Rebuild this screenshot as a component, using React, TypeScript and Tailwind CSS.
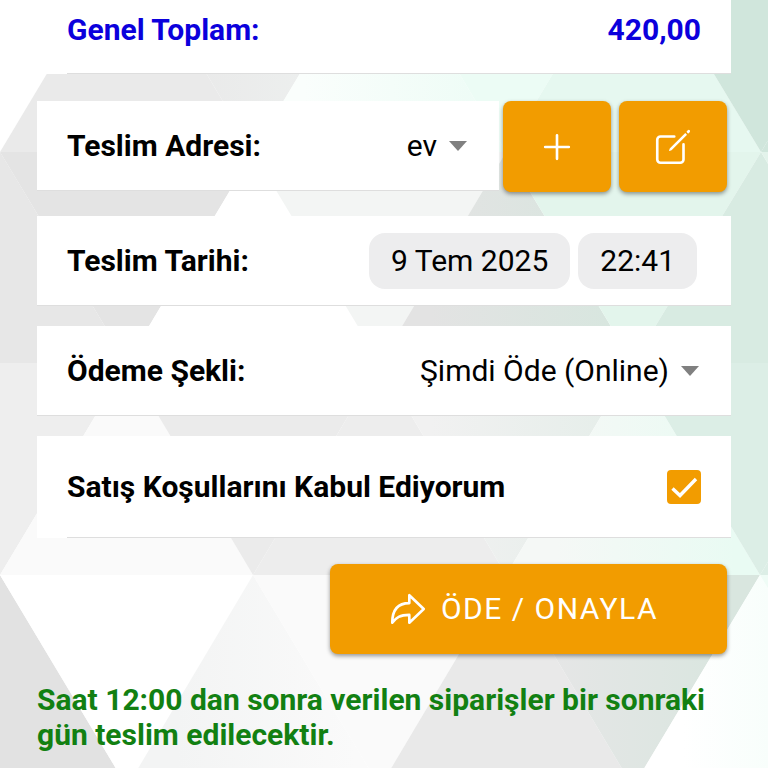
import { useState, type ReactNode } from "react";

type Facet = { points: string; fill: string };

const FACETS: Facet[] = [
  { points: "127,-60 0,152 253,152", fill: "#eaeaea" },
  { points: "127,-60 380,-60 253,152", fill: "url(#topGrey)" },
  { points: "380,-60 253,152 506,152", fill: "url(#topMint)" },
  { points: "380,-60 633,-60 506,152", fill: "#ecfcf5" },
  { points: "633,-60 506,152 761,152", fill: "#e6f8f0" },
  { points: "633,-60 887,-60 761,152", fill: "#d0e6dc" },
  { points: "887,-60 761,152 1014,152", fill: "#d0e6dc" },
  { points: "0,152 -127,363 127,363", fill: "#e7e7e7" },
  { points: "0,152 253,152 127,363", fill: "#e4e4e4" },
  { points: "253,152 127,363 380,363", fill: "#ffffff" },
  { points: "253,152 506,152 380,363", fill: "#f3f5f4" },
  { points: "506,152 380,363 633,363", fill: "url(#midGrey)" },
  { points: "506,152 761,152 633,363", fill: "#e3f5ec" },
  { points: "761,152 633,363 887,363", fill: "#d8ebe2" },
  { points: "761,152 1014,152 887,363", fill: "#e3f3eb" },
  { points: "-127,363 127,363 0,575", fill: "#eeeeee" },
  { points: "127,363 0,575 253,575", fill: "#fafafa" },
  { points: "127,363 380,363 253,575", fill: "#ebebeb" },
  { points: "380,363 253,575 506,575", fill: "#ededed" },
  { points: "380,363 633,363 506,575", fill: "url(#lowGrey)" },
  { points: "633,363 506,575 760,575", fill: "url(#lowMint)" },
  { points: "633,363 887,363 760,575", fill: "#dceee6" },
  { points: "887,363 760,575 1014,575", fill: "#dceee6" },
  { points: "0,575 -127,787 127,787", fill: "#e2e2e2" },
  { points: "0,575 253,575 127,787", fill: "#ffffff" },
  { points: "253,575 127,787 380,787", fill: "url(#footWhite)" },
  { points: "253,575 506,575 380,787", fill: "#fafafa" },
  { points: "506,575 380,787 633,787", fill: "#e9e9e9" },
  { points: "506,575 760,575 633,787", fill: "url(#footGrey)" },
  { points: "760,575 633,787 887,787", fill: "url(#footMint)" },
  { points: "760,575 1014,575 887,787", fill: "#effcf6" },
];

const GRADIENTS = [
  { id: "topGrey", from: "#e9e9e9", to: "#eef1f0" },
  { id: "topMint", from: "#fafefc", to: "#eefcf6" },
  { id: "midGrey", from: "#e3e3e3", to: "#d8e6df" },
  { id: "lowGrey", from: "#f1f1f1", to: "#e6eeea" },
  { id: "lowMint", from: "#f5f8f6", to: "#e9fbf3" },
  { id: "footWhite", from: "#f3f4f4", to: "#fafafa" },
  { id: "footGrey", from: "#e5e6e6", to: "#d9e6df" },
  { id: "footMint", from: "#ffffff", to: "#f0fdf7" },
];

const Background = () => (
  <svg
    className="absolute inset-0 -z-10 h-full w-full"
    viewBox="0 0 768 768"
    preserveAspectRatio="xMidYMin slice"
    aria-hidden="true"
  >
    <defs>
      {GRADIENTS.map((gradient) => (
        <linearGradient key={gradient.id} id={gradient.id}>
          <stop offset="0.2" stopColor={gradient.from} />
          <stop offset="0.9" stopColor={gradient.to} />
        </linearGradient>
      ))}
    </defs>
    {FACETS.map((facet) => (
      <polygon key={facet.points} points={facet.points} fill={facet.fill} />
    ))}
  </svg>
);

const AddIcon = () => (
  <svg className="h-[42px] w-[42px]" viewBox="0 0 512 512" fill="none" stroke="currentColor" strokeWidth="32" strokeLinecap="round" aria-hidden="true">
    <path d="M256 112v288M400 256H112" />
  </svg>
);

const EditIcon = () => (
  <svg className="h-[42px] w-[42px]" viewBox="0 0 512 512" fill="none" stroke="currentColor" strokeWidth="32" strokeLinecap="round" strokeLinejoin="round" aria-hidden="true">
    <path d="M384 224v184a40 40 0 0 1-40 40H104a40 40 0 0 1-40-40V168a40 40 0 0 1 40-40h167.48" />
    <path
      fill="currentColor"
      stroke="none"
      d="M459.94 53.25a16.06 16.06 0 0 0-23.22-.56L424.35 65a8 8 0 0 0 0 11.31l11.34 11.32a8 8 0 0 0 11.34 0l12.06-12c6.1-6.09 6.67-16.01.85-22.38zM399.34 90 218.82 270.2a9 9 0 0 0-2.31 3.93L208.16 299a3.91 3.91 0 0 0 4.86 4.86l24.85-8.35a9 9 0 0 0 3.93-2.31L422 112.66a9 9 0 0 0 0-12.66l-9.95-10a9 9 0 0 0-12.71 0z"
    />
  </svg>
);

const ShareIcon = () => (
  <svg className="h-[42px] w-[42px]" viewBox="0 0 512 512" fill="none" stroke="currentColor" strokeWidth="32" strokeLinejoin="round" aria-hidden="true">
    <path d="M448 256 272 88v96C103.57 184 64 304.77 64 424c48.61-62.24 91.6-96 208-96v96z" />
  </svg>
);

const Caret = () => (
  <svg className="h-3 w-[18px]" viewBox="0 0 18 12" fill="#808080" aria-hidden="true">
    <path d="M0 1h18l-9 10z" />
  </svg>
);

const Row = ({ children }: { children: ReactNode }) => (
  <div className="flex h-[90px] min-w-0 flex-1 items-center justify-between border-b border-[#dedede] bg-white pr-8 pl-[30px]">
    {children}
  </div>
);

type PickerProps = {
  id: string;
  options: string[];
};

const Picker = ({ id, options }: PickerProps) => (
  <div className="flex items-center gap-3">
    <select id={id} className="field-sizing-content h-9 appearance-none bg-transparent leading-9 outline-none">
      {options.map((option) => (
        <option key={option}>{option}</option>
      ))}
    </select>
    <Caret />
  </div>
);

const App = () => {
  const [accepted, setAccepted] = useState(true);

  return (
    <div className="relative isolate min-h-screen overflow-hidden bg-white font-[Roboto,sans-serif] text-[30px] leading-9 text-black">
      <Background />
      <main className="flex flex-col px-[37px] pb-4">
        <div className="bg-white pl-[30px]">
          <div className="flex justify-between border-b border-[#dedede] pt-3 pr-[30px] pb-[25px] font-bold text-[#0b00dc]">
            <span>Genel Toplam:</span>
            <span>420,00</span>
          </div>
        </div>

        <div className="mt-[27px] flex gap-1">
          <Row>
            <label htmlFor="address" className="font-bold">Teslim Adresi:</label>
            <Picker id="address" options={["ev"]} />
          </Row>
          <div className="mr-1 flex gap-2">
            <button
              type="button"
              aria-label="Yeni adres"
              className="flex h-[91px] w-[108px] items-center justify-center rounded-lg bg-[#f29c00] text-white shadow-[0_2px_4px_rgba(0,0,0,0.4)]"
            >
              <AddIcon />
            </button>
            <button
              type="button"
              aria-label="Adresi düzenle"
              className="flex h-[91px] w-[108px] items-center justify-center rounded-lg bg-[#f29c00] text-white shadow-[0_2px_4px_rgba(0,0,0,0.4)]"
            >
              <EditIcon />
            </button>
          </div>
        </div>

        <div className="mt-6 flex">
          <Row>
            <span className="font-bold">Teslim Tarihi:</span>
            <div className="mr-0.5 flex gap-2">
              <button type="button" className="h-14 rounded-2xl bg-[#ededee] px-[22px]">
                9 Tem 2025
              </button>
              <button type="button" className="h-14 rounded-2xl bg-[#ededee] px-[22px]">
                22:41
              </button>
            </div>
          </Row>
        </div>

        <div className="mt-5 flex">
          <Row>
            <label htmlFor="payment" className="font-bold">Ödeme Şekli:</label>
            <Picker id="payment" options={["Şimdi Öde (Online)"]} />
          </Row>
        </div>

        <div className="mt-5 bg-white pl-[30px]">
          <div className="flex h-[102px] items-center justify-between border-b border-[#dedede] pr-[30px]">
            <label htmlFor="terms" className="font-bold">Satış Koşullarını Kabul Ediyorum</label>
            <span className="grid">
              <input
                id="terms"
                type="checkbox"
                checked={accepted}
                onChange={(event) => setAccepted(event.target.checked)}
                className="col-start-1 row-start-1 h-[34px] w-[34px] appearance-none rounded border-2 border-[#f29c00] checked:bg-[#f29c00]"
              />
              {accepted && (
                <svg
                  className="pointer-events-none col-start-1 row-start-1 h-[34px] w-[34px]"
                  viewBox="0 0 34 34"
                  fill="none"
                  stroke="#fff"
                  strokeWidth="3.4"
                  aria-hidden="true"
                >
                  <path d="M5.5 18.5 13 25.5 29 9" />
                </svg>
              )}
            </span>
          </div>
        </div>

        <button
          type="button"
          className="mt-[26px] mr-1 flex h-[90px] w-[397px] max-w-full items-center justify-center gap-3 self-end rounded-lg bg-[#f29c00] pr-3 tracking-wider text-white shadow-[0_2px_4px_rgba(0,0,0,0.4)]"
        >
          <ShareIcon />
          ÖDE / ONAYLA
        </button>

        <p className="mt-7 leading-[35px] font-bold text-[#128012]">
          Saat 12:00 dan sonra verilen siparişler bir sonraki gün teslim edilecektir.
        </p>
      </main>
    </div>
  );
};

export default App;
